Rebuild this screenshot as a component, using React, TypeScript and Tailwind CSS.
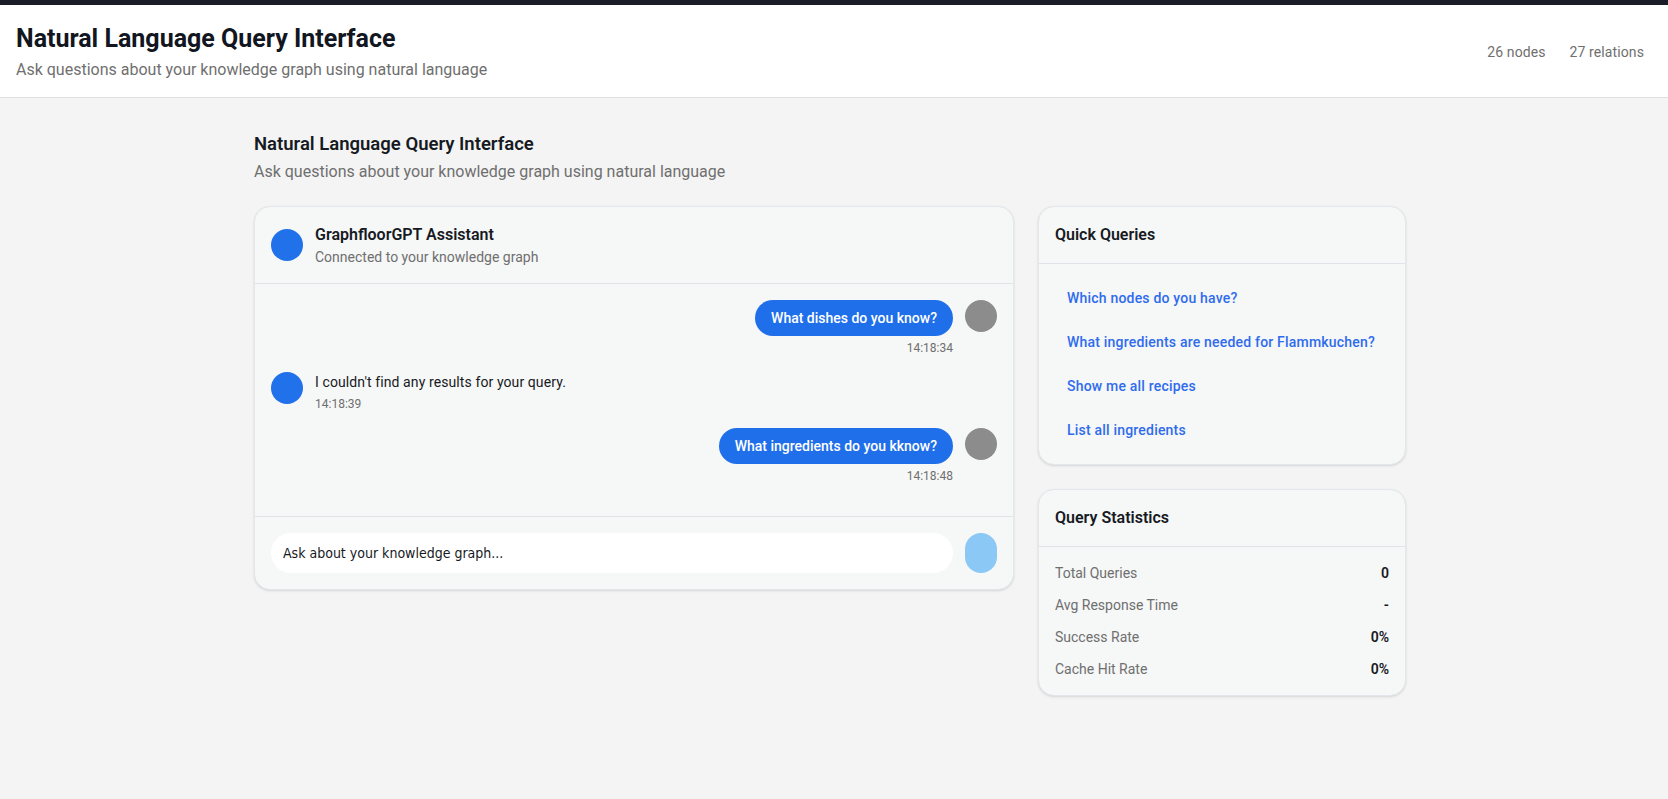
import React from "react";

const font = { fontFamily: "Roboto, 'Noto Sans', sans-serif" };

function UserMsg({ text, time }: { text: string; time: string }) {
  return (
    <div className="flex justify-end gap-3">
      <div className="flex flex-col items-end">
        <div className="rounded-full bg-[#1f6feb] px-4 py-2 text-[14px] leading-5 font-medium text-white">{text}</div>
        <div className="mt-1 text-[12px] leading-4 text-[#6f6f6f]">{time}</div>
      </div>
      <div className="h-8 w-8 shrink-0 rounded-full bg-[#8c8c8c]" />
    </div>
  );
}

export default function App() {
  return (
    <div className="min-h-screen bg-[#f4f4f4] text-[#161a23]" style={font}>
      <div className="h-[5px] bg-[#1a1c28]" />
      <header className="flex items-center justify-between border-b border-[#e0e0e0] bg-white pt-[18px] pr-6 pb-[15px] pl-4">
        <div>
          <h1 className="text-[25px] leading-8 font-bold text-[#121620]">Natural Language Query Interface</h1>
          <p className="mt-[3px] text-[16px] leading-6 text-[#6f6f6f]">Ask questions about your knowledge graph using natural language</p>
        </div>
        <div className="flex gap-6 text-[14px] tracking-[0.1px] text-[#6f6f6f]">
          <span>26 nodes</span>
          <span>27 relations</span>
        </div>
      </header>

      <div className="pr-2">
        <main className="mx-auto max-w-6xl pt-8">
          <h2 className="text-[18.5px] leading-7 font-semibold text-[#161a23]">Natural Language Query Interface</h2>
          <p className="mt-0.5 text-[16px] leading-6 text-[#6f6f6f]">Ask questions about your knowledge graph using natural language</p>

          <div className="mt-[22px] grid grid-cols-3 items-start gap-6">
            <section className="col-span-2 overflow-hidden rounded-2xl border border-[#e2e7eb] bg-[#f6f7f7] shadow-sm">
              <div className="flex items-center gap-3 border-b border-[#e0e4e8] p-4">
                <div className="h-8 w-8 shrink-0 rounded-full bg-[#2171ea]" />
                <div>
                  <div className="text-[16px] leading-6 font-semibold text-[#161a23]">GraphfloorGPT Assistant</div>
                  <div className="text-[14px] leading-5 text-[#6f6f6f]">Connected to your knowledge graph</div>
                </div>
              </div>
              <div className="h-[232px] space-y-4 overflow-y-auto px-4 pt-4 pb-4">
                <UserMsg text="What dishes do you know?" time="14:18:34" />
                <div className="flex gap-3">
                  <div className="h-8 w-8 shrink-0 rounded-full bg-[#2171ea]" />
                  <div>
                    <div className="text-[14px] leading-5 tracking-[0.1px] text-[#161a23]">I couldn't find any results for your query.</div>
                    <div className="mt-1 text-[12px] leading-4 text-[#6f6f6f]">14:18:39</div>
                  </div>
                </div>
                <UserMsg text="What ingredients do you kknow?" time="14:18:48" />
              </div>
              <div className="flex items-center gap-3 border-t border-[#e0e4e8] p-4">
                <input
                  className="h-10 flex-1 rounded-full bg-white px-3 text-[14px] text-[#161a23] outline-none placeholder:text-[#161a23]"
                  style={{ fontFamily: "'DejaVu Sans Condensed', 'Liberation Sans Narrow', sans-serif" }}
                  placeholder="Ask about your knowledge graph..."
                />
                <button className="h-10 w-8 shrink-0 rounded-full bg-[#8bc8f5]" aria-label="Send" />
              </div>
            </section>

            <div className="flex flex-col gap-6">
              <section className="overflow-hidden rounded-2xl border border-[#e2e7eb] bg-[#f6f7f7] shadow-sm">
                <div className="border-b border-[#e0e4e8] p-4 text-[16px] leading-6 font-semibold text-[#161a23]">Quick Queries</div>
                <div className="flex flex-col p-3">
                  {[
                    "Which nodes do you have?",
                    "What ingredients are needed for Flammkuchen?",
                    "Show me all recipes",
                    "List all ingredients",
                  ].map((q) => (
                    <button key={q} className="px-4 py-3 text-left text-[14px] leading-5 font-medium tracking-[0.2px] text-[#2f6ced]">
                      {q}
                    </button>
                  ))}
                </div>
              </section>

              <section className="overflow-hidden rounded-2xl border border-[#e2e7eb] bg-[#f6f7f7] shadow-sm">
                <div className="border-b border-[#e0e4e8] p-4 text-[16px] leading-6 font-semibold text-[#161a23]">Query Statistics</div>
                <div className="flex flex-col gap-3 p-4">
                  {[
                    ["Total Queries", "0"],
                    ["Avg Response Time", "-"],
                    ["Success Rate", "0%"],
                    ["Cache Hit Rate", "0%"],
                  ].map(([k, v]) => (
                    <div key={k} className="flex justify-between text-[14px] leading-5">
                      <span className="text-[#6f6f6f]">{k}</span>
                      <span className="font-semibold text-[#161a23]">{v}</span>
                    </div>
                  ))}
                </div>
              </section>
            </div>
          </div>
        </main>
      </div>
    </div>
  );
}
